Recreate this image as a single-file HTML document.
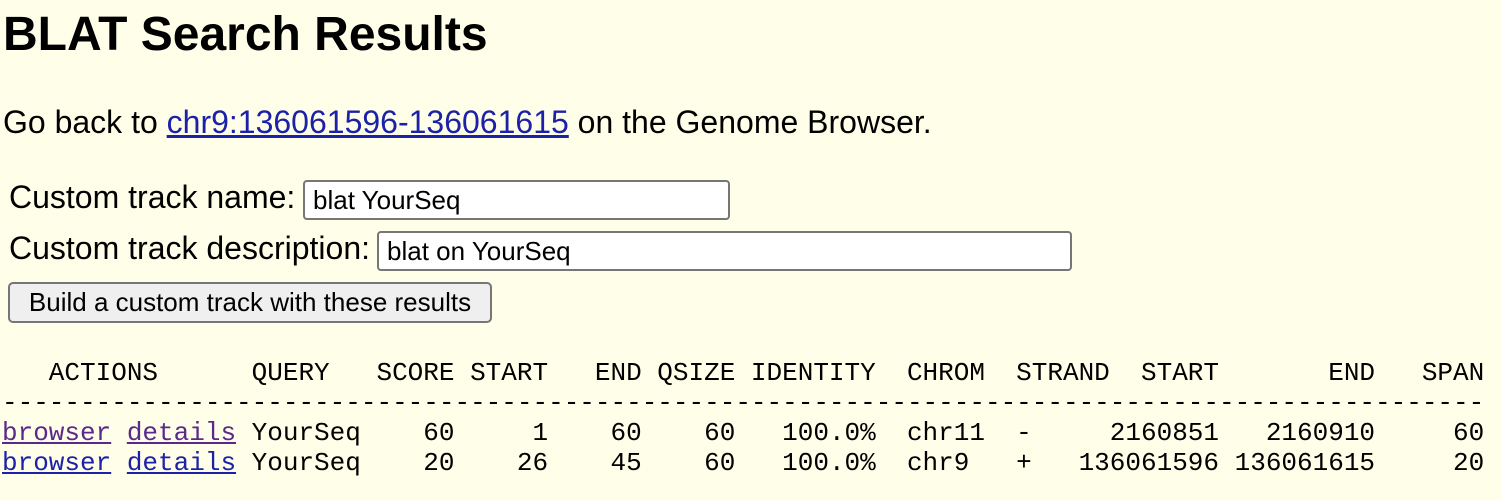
<!DOCTYPE html>
<html><head><meta charset="utf-8"><style>
html,body{margin:0;padding:0;background:#fffee8;width:1502px;height:500px;overflow:hidden;position:relative;font-family:"Liberation Sans",Arial,sans-serif;color:#000}
.a{position:absolute;white-space:pre;margin:0}
h1{font-size:48px;line-height:48px;font-weight:bold}
.t{font-size:32px;line-height:32px}
a.l{color:#1c22a8;text-decoration:underline}
a.v{color:#5a2a8a;text-decoration:underline}
.inp{position:absolute;box-sizing:border-box;height:40px;border:2px solid #767676;border-radius:4px;background:#fff;font-size:26px;line-height:36px;padding-left:8px;white-space:pre}
.btn{position:absolute;box-sizing:border-box;left:8px;top:282px;width:484px;height:41px;border:2px solid #767676;border-radius:5px;background:#efefef;font-size:26px;line-height:37px;text-align:center}
pre{font-family:"Liberation Mono",monospace;font-size:26px;line-height:30px}
</style></head><body>
<h1 class="a" style="left:3px;top:11px">BLAT Search Results</h1>
<div class="a t" style="left:3px;top:106px">Go back to <a class="l" href="#">chr9:136061596-136061615</a> on the Genome Browser.</div>
<div class="a t" style="left:9px;top:181px">Custom track name:</div>
<div class="inp" style="left:303px;top:180px;width:427px">blat YourSeq</div>
<div class="a t" style="left:9px;top:232px">Custom track description:</div>
<div class="inp" style="left:377px;top:231px;width:695px">blat on YourSeq</div>
<div class="btn">Build a custom track with these results</div>
<pre class="a" style="left:2px;top:358px">   ACTIONS      QUERY   SCORE START   END QSIZE IDENTITY  CHROM  STRAND  START       END   SPAN
-----------------------------------------------------------------------------------------------
<a class="v" href="#">browser</a> <a class="v" href="#">details</a> YourSeq    60     1    60    60   100.0%  chr11  -     2160851   2160910     60
<a class="l" href="#">browser</a> <a class="l" href="#">details</a> YourSeq    20    26    45    60   100.0%  chr9   +   136061596 136061615     20</pre>
</body></html>
